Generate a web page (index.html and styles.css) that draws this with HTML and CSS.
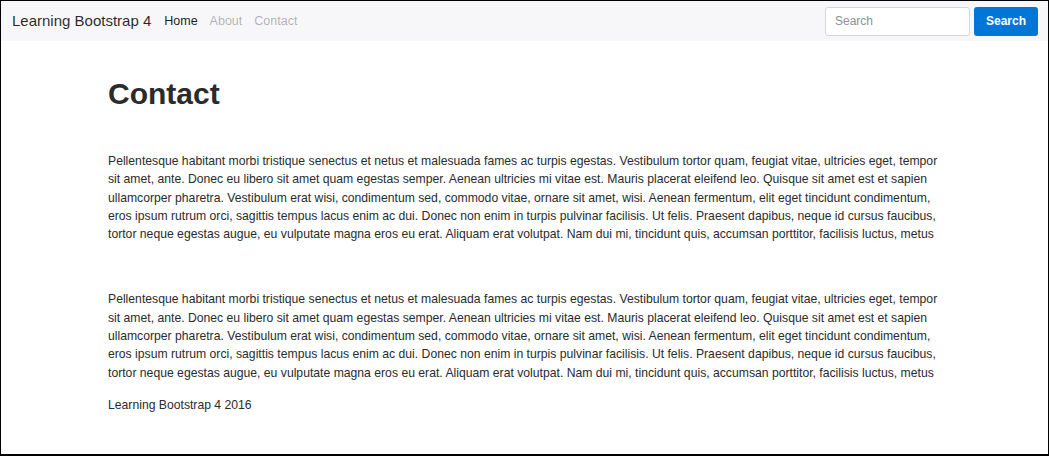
FILE: index.html
```html
<!DOCTYPE html>
<html lang="en">

<head>
    <meta charset="UTF-8">
    <meta name="viewport" content="width=device-width, initial-scale=1.0">
    <title>Contact | Learning Bootstrap 4</title>
    <link rel="stylesheet" href="styles.css">
</head>

<body>
    <nav class="navbar">
        <a class="brand" href="#">Learning Bootstrap 4</a>
        <ul class="nav-links">
            <li><a class="active" href="#">Home</a></li>
            <li><a href="#">About</a></li>
            <li><a href="#">Contact</a></li>
        </ul>
        <form class="search-form">
            <input type="text" placeholder="Search">
            <button type="button">Search</button>
        </form>
    </nav>

    <main class="container">
        <h1>Contact</h1>
        <p class="first">Pellentesque habitant morbi tristique senectus et netus et malesuada fames ac turpis egestas. Vestibulum tortor quam, feugiat vitae, ultricies eget, tempor sit amet, ante. Donec eu libero sit amet quam egestas semper. Aenean ultricies mi vitae est. Mauris placerat eleifend leo. Quisque sit amet est et sapien ullamcorper pharetra. Vestibulum erat wisi, condimentum sed, commodo vitae, ornare sit amet, wisi. Aenean fermentum, elit eget tincidunt condimentum, eros ipsum rutrum orci, sagittis tempus lacus enim ac dui. Donec non enim in turpis pulvinar facilisis. Ut felis. Praesent dapibus, neque id cursus faucibus, tortor neque egestas augue, eu vulputate magna eros eu erat. Aliquam erat volutpat. Nam dui mi, tincidunt quis, accumsan porttitor, facilisis luctus, metus</p>
        <p class="second">Pellentesque habitant morbi tristique senectus et netus et malesuada fames ac turpis egestas. Vestibulum tortor quam, feugiat vitae, ultricies eget, tempor sit amet, ante. Donec eu libero sit amet quam egestas semper. Aenean ultricies mi vitae est. Mauris placerat eleifend leo. Quisque sit amet est et sapien ullamcorper pharetra. Vestibulum erat wisi, condimentum sed, commodo vitae, ornare sit amet, wisi. Aenean fermentum, elit eget tincidunt condimentum, eros ipsum rutrum orci, sagittis tempus lacus enim ac dui. Donec non enim in turpis pulvinar facilisis. Ut felis. Praesent dapibus, neque id cursus faucibus, tortor neque egestas augue, eu vulputate magna eros eu erat. Aliquam erat volutpat. Nam dui mi, tincidunt quis, accumsan porttitor, facilisis luctus, metus</p>
        <footer>Learning Bootstrap 4 2016</footer>
    </main>
</body>

</html>
```

FILE: styles.css
```css
/* Reset & Global Styling */
* {
    margin: 0;
    padding: 0;
    box-sizing: border-box;
}

html {
    height: 100%;
}

body {
    height: 100%;
    font-family: 'Liberation Sans', Arial, sans-serif;
    font-size: 12.2px;
    line-height: 18.3px;
    color: #292b2c;
    background-color: #fff;
    border: 1px solid #000;
    border-bottom-width: 2px;
    overflow: hidden;
}

/* Navbar */
.navbar {
    display: flex;
    align-items: center;
    height: 40px;
    padding: 0 10px 0 11px;
    background-color: #f7f7f9;
}

.brand {
    font-size: 15px;
    color: rgba(0, 0, 0, 0.85);
    text-decoration: none;
    margin-right: 13px;
}

.nav-links {
    display: flex;
    list-style: none;
    gap: 12px;
    flex: 1;
}

.nav-links a {
    font-size: 12.5px;
    color: rgba(0, 0, 0, 0.3);
    text-decoration: none;
}

.nav-links a.active {
    color: rgba(0, 0, 0, 0.9);
}

.search-form {
    display: flex;
    gap: 4px;
}

.search-form input {
    width: 145px;
    height: 29px;
    padding: 0 9px;
    font-family: inherit;
    font-size: 12px;
    color: #464a4c;
    border: 1px solid #d6d6d6;
    border-radius: 3px;
    background: #fff;
}

.search-form input::placeholder {
    color: #8e9193;
}

.search-form button {
    width: 64px;
    height: 29px;
    font-family: inherit;
    font-size: 12px;
    font-weight: bold;
    color: #fff;
    background-color: #0275d8;
    border: none;
    border-radius: 3px;
}

/* Content */
.container {
    width: 832px;
    margin-left: 107px;
}

h1 {
    font-size: 30px;
    font-weight: bold;
    line-height: 33px;
    margin-top: 36px;
    color: #292b2c;
}

p.first {
    margin-top: 42px;
}

p.second {
    margin-top: 47px;
}

footer {
    margin-top: 14px;
}
```
